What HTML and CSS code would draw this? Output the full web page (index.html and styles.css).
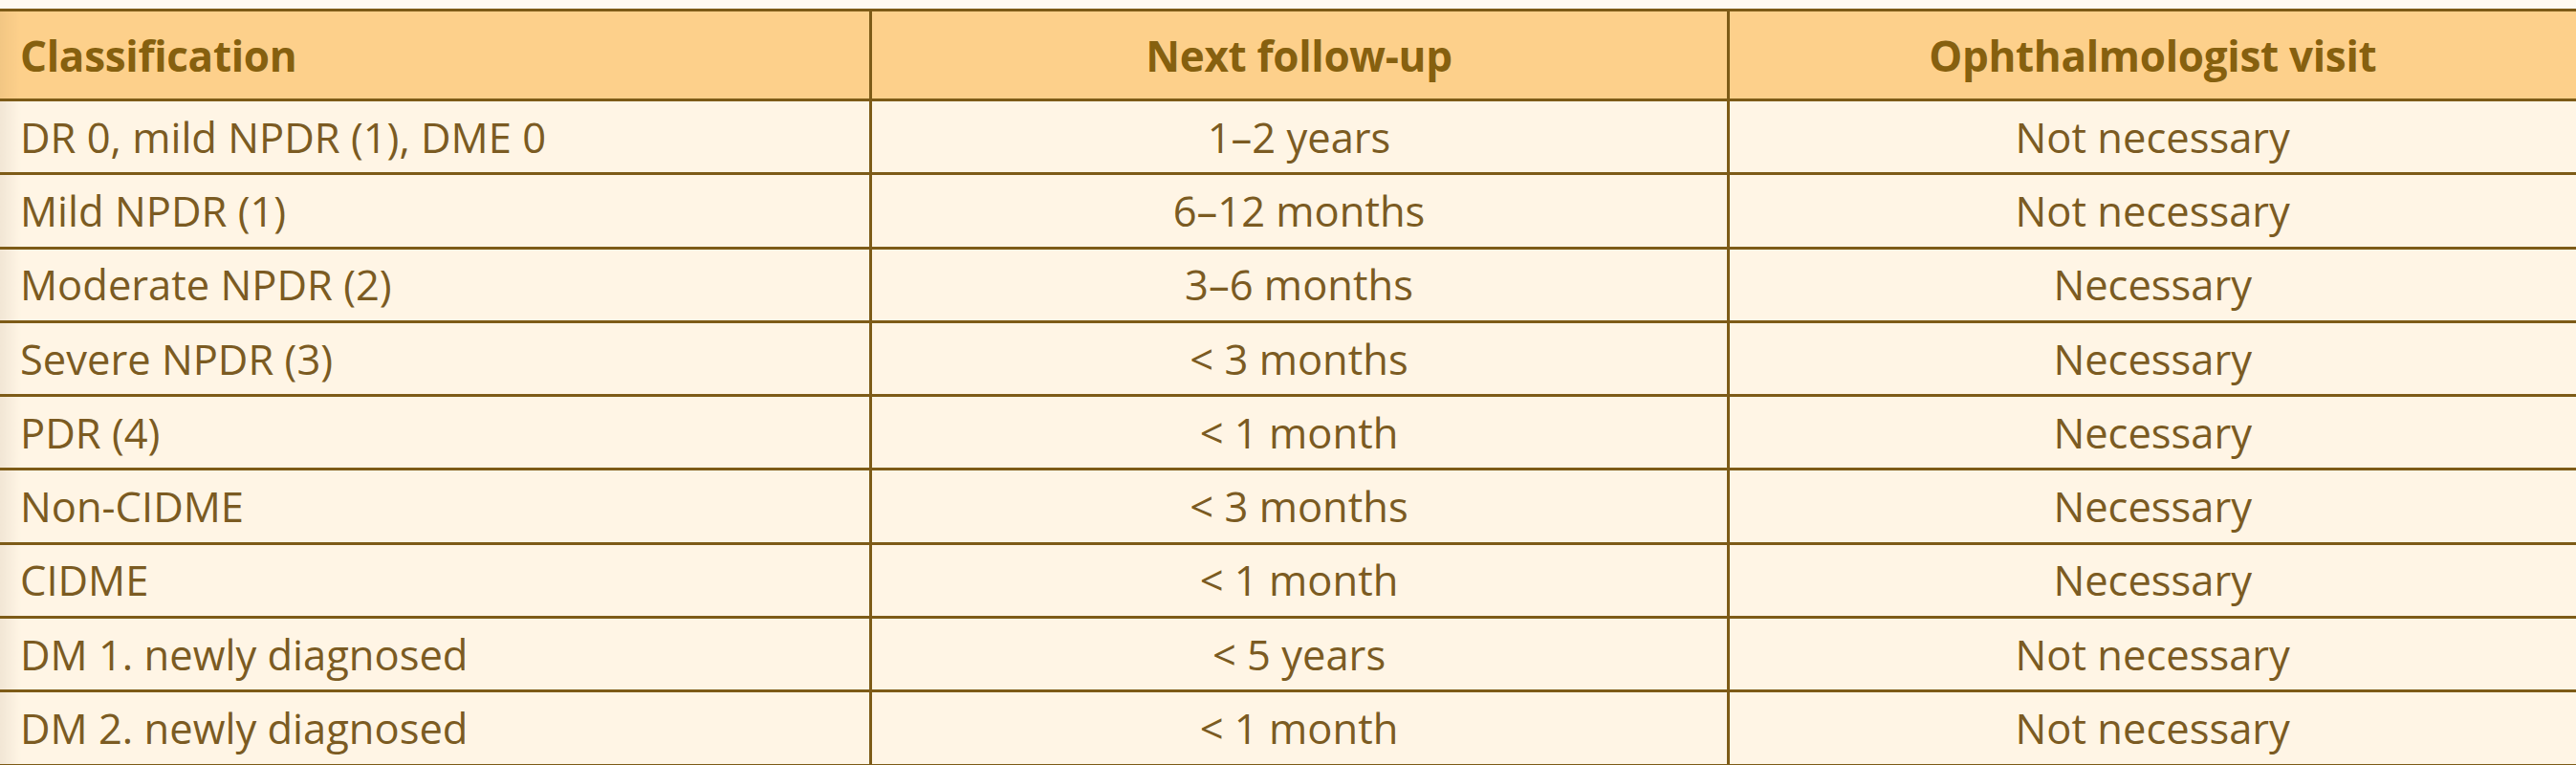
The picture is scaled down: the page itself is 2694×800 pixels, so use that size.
FILE: index.html
```html
<!DOCTYPE html>
<html lang="en">
<head>
<meta charset="utf-8">
<title>Follow-up schedule</title>
<link rel="stylesheet" href="styles.css">
</head>
<body>
<div class="page">
  <table class="schedule">
    <colgroup>
      <col class="c1">
      <col class="c2">
      <col class="c3">
    </colgroup>
    <thead>
      <tr>
        <th class="left">Classification</th>
        <th>Next follow-up</th>
        <th>Ophthalmologist visit</th>
      </tr>
    </thead>
    <tbody>
      <tr><td class="left">DR 0, mild NPDR (1), DME 0</td><td>1–2 years</td><td>Not necessary</td></tr>
      <tr><td class="left">Mild NPDR (1)</td><td>6–12 months</td><td>Not necessary</td></tr>
      <tr><td class="left">Moderate NPDR (2)</td><td>3–6 months</td><td>Necessary</td></tr>
      <tr><td class="left">Severe NPDR (3)</td><td>&lt; 3 months</td><td>Necessary</td></tr>
      <tr><td class="left">PDR (4)</td><td>&lt; 1 month</td><td>Necessary</td></tr>
      <tr><td class="left">Non-CIDME</td><td>&lt; 3 months</td><td>Necessary</td></tr>
      <tr><td class="left">CIDME</td><td>&lt; 1 month</td><td>Necessary</td></tr>
      <tr><td class="left">DM 1. newly diagnosed</td><td>&lt; 5 years</td><td>Not necessary</td></tr>
      <tr><td class="left">DM 2. newly diagnosed</td><td>&lt; 1 month</td><td>Not necessary</td></tr>
    </tbody>
  </table>
</div>
</body>
</html>
```

FILE: styles.css
```css
html, body {
  margin: 0;
  padding: 0;
  background: #fffaf1;
}

.page {
  padding-top: 9px;
  font-family: "Open Sans", "Liberation Sans", sans-serif;
}

.schedule {
  width: 100%;
  border-collapse: collapse;
  table-layout: fixed;
}

.schedule .c1 { width: 910px; }
.schedule .c2 { width: 897px; }
.schedule .c3 { width: auto; }

.schedule th,
.schedule td {
  padding: 0;
  text-align: center;
  vertical-align: middle;
  border-top: 3px solid #7d5b17;
  border-bottom: 3px solid #7d5b17;
  white-space: nowrap;
}

.schedule th + th,
.schedule td + td {
  border-left: 3px solid #7d5b17;
}

.schedule th {
  height: 91px;
  background: #fdd08b;
  color: #86600f;
  font-weight: 700;
  font-size: 44px;
  letter-spacing: -0.3px;
}

.schedule td {
  height: 74.3px;
  background: #fff5e5;
  color: #7b5b22;
  font-weight: 400;
  font-size: 43.5px;
}

.schedule .left {
  text-align: left;
  padding-left: 21px;
}

.schedule td.left {
  background: linear-gradient(to right, rgba(120, 100, 70, 0.10), rgba(120, 100, 70, 0) 22px), #fff5e5;
}

.schedule th.left {
  background: linear-gradient(to right, rgba(120, 90, 40, 0.08), rgba(120, 90, 40, 0) 22px), #fdd08b;
}
```
